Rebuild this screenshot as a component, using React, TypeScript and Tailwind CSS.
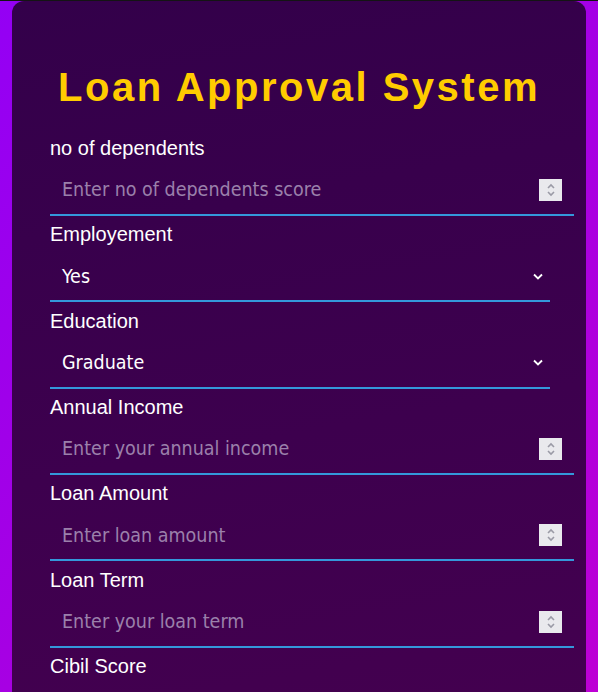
const labelCls = "block text-[20px] leading-[23px] text-white font-['Liberation_Sans',Arial,sans-serif]";
const fieldFont = "font-['DejaVu_Sans_Condensed','DejaVu_Sans',sans-serif] [font-stretch:condensed] text-[19.5px]";

function Spinner() {
  return (
    <div className="flex h-[22px] w-[23px] flex-col items-center justify-center bg-[#e9e9ed]">
      <svg width="10" height="16" viewBox="0 0 10 16" fill="none" stroke="#9a9aa6" strokeWidth="1.6">
        <path d="M2 6 L5 3 L8 6" />
        <path d="M2 10 L5 13 L8 10" />
      </svg>
    </div>
  );
}

function NumberField({ label, placeholder }: { label: string; placeholder: string }) {
  return (
    <div className="mb-[7.33px]">
      <label className={labelCls}>{label}</label>
      <div className="mt-[6px] flex h-[50px] w-[524px] items-center border-b-2 border-[#3498db] pl-[12px] pr-[12px]">
        <input
          type="text"
          placeholder={placeholder}
          className={`min-w-0 flex-1 bg-transparent text-white outline-none placeholder:text-[#9b80ab] ${fieldFont}`}
        />
        <Spinner />
      </div>
    </div>
  );
}

function SelectField({ label, value }: { label: string; value: string }) {
  return (
    <div className="mb-[7.33px]">
      <label className={labelCls}>{label}</label>
      <div className="mt-[6px] flex h-[50px] w-[500px] items-center border-b-2 border-[#3498db] pl-[12px] pr-[7px]">
        <span className={`flex-1 text-white ${fieldFont}`}>{value}</span>
        <svg width="10" height="7" viewBox="0 0 10 7" fill="none" stroke="white" strokeWidth="1.8">
          <path d="M1 1.5 L5 5.5 L9 1.5" />
        </svg>
      </div>
    </div>
  );
}

export default function App() {
  return (
    <div className="min-h-screen border-t border-[#141414] bg-[linear-gradient(135deg,#9400f4_0%,#a800e2_50%,#c400d0_100%)] px-[12px]">
      <div className="rounded-[12px] bg-[linear-gradient(170deg,#33004a_0%,#3d004e_50%,#470050_100%)] px-[38px] pb-[40px] pt-[63px]">
        <h1 className="mb-[27px] text-center font-['Liberation_Sans',Arial,sans-serif] text-[40px] font-bold leading-[46px] tracking-[2.5px] text-[#ffcc00]">
          Loan Approval System
        </h1>
        <NumberField label="no of dependents" placeholder="Enter no of dependents score" />
        <SelectField label="Employement" value="Yes" />
        <SelectField label="Education" value="Graduate" />
        <NumberField label="Annual Income" placeholder="Enter your annual income" />
        <NumberField label="Loan Amount" placeholder="Enter loan amount" />
        <NumberField label="Loan Term" placeholder="Enter your loan term" />
        <NumberField label="Cibil Score" placeholder="Enter your cibil score" />
        <NumberField label="Residential Assets Value" placeholder="Enter residential assets value" />
      </div>
    </div>
  );
}
